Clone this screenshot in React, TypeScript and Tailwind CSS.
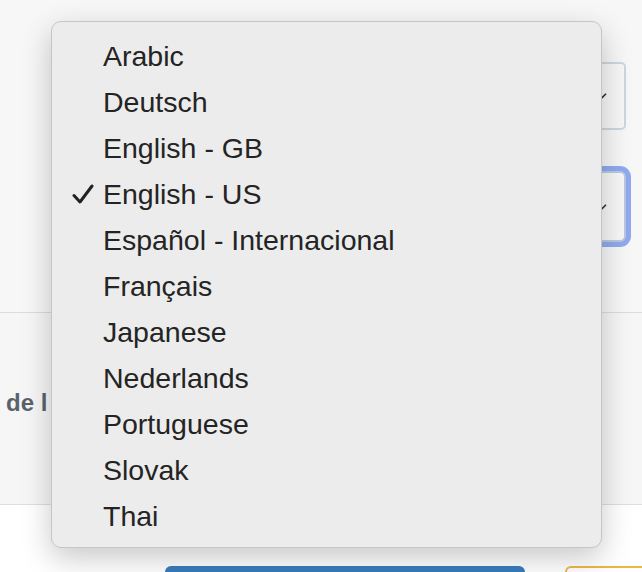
import { ChevronDown } from 'lucide-react';

const languages = [
  'Arabic',
  'Deutsch',
  'English - GB',
  'English - US',
  'Español - Internacional',
  'Français',
  'Japanese',
  'Nederlands',
  'Portuguese',
  'Slovak',
  'Thai',
];

const selected = 'English - US';

function Check() {
  return (
    <svg width="22" height="20" viewBox="0 0 22 20" fill="none">
      <path d="M2 11.5 L8 18 L20 2" stroke="#222" strokeWidth="3" strokeLinecap="round" strokeLinejoin="round" />
    </svg>
  );
}

function LanguageMenu() {
  return (
    <div className="absolute left-[51px] top-[21px] w-[551px] rounded-[10px] border border-[#c6c6c6] bg-[#ececec] pt-[11px] pb-[8px] shadow-[0_10px_30px_rgba(0,0,0,0.22)]">
      {languages.map((lang) => (
        <div key={lang} className="flex h-[46px] items-center">
          <div className="flex w-[51px] justify-end pr-[9px]">
            {lang === selected && <Check />}
          </div>
          <span className="text-[28.5px] leading-none text-[#242424]">{lang}</span>
        </div>
      ))}
    </div>
  );
}

export default function App() {
  return (
    <div
      className="relative h-[572px] w-[642px] overflow-hidden bg-white"
      style={{ fontFamily: '"Liberation Sans", Arial, sans-serif' }}
    >
      {/* Settings form */}
      <div className="flex h-[313px] flex-col border-b border-[#dcdcdc] bg-[#f7f7f7] pt-[62px] pr-[16px]">
        <div className="flex justify-end">
          <div className="flex h-[68px] w-[340px] items-center justify-end rounded-[5px] border-2 border-[#cdd6e2] bg-[#f7f7f7] pr-[15px]">
            <ChevronDown size={14} strokeWidth={3} className="text-[#333]" />
          </div>
        </div>
        <div className="mt-[41px] flex justify-end">
          <div className="flex h-[71px] w-[340px] items-center justify-end rounded-[6px] border-2 border-[#bcc8de] bg-[#f7f7f7] pr-[15px] shadow-[0_0_0_5px_#90aaf0]">
            <ChevronDown size={14} strokeWidth={3} className="text-[#333]" />
          </div>
        </div>
      </div>

      {/* Section */}
      <div className="flex h-[192px] items-center border-b border-[#dedede] bg-[#f6f6f6] pb-[12px] pl-[6px]">
        <span className="text-[24px] font-bold whitespace-nowrap text-[#5a636c]">de l</span>
      </div>

      {/* Footer buttons */}
      <div className="flex pt-[61px] pl-[165px]">
        <div className="h-[40px] w-[360px] shrink-0 rounded-[6px] bg-[#3a7bbd]" />
        <div className="ml-[40px] h-[40px] w-[120px] shrink-0 rounded-[6px] border-2 border-[#efb645] bg-white" />
      </div>

      <LanguageMenu />
    </div>
  );
}
